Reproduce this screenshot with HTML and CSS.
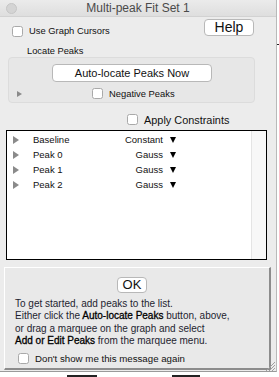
FILE: index.html
```html
<!DOCTYPE html>
<html lang="en">
<head>
    <meta charset="UTF-8">
    <title>Multi-peak Fit Set 1</title>
    <link rel="stylesheet" href="styles.css">
</head>
<body>
    <div class="window">
        <div class="titlebar">
            <span class="close-dot"></span>
            <span class="title">Multi-peak Fit Set 1</span>
        </div>

        <div class="top-row">
            <label class="check check-cursors"><span class="box"></span>Use Graph Cursors</label>
            <button class="btn btn-help">Help</button>
        </div>

        <div class="section-label">Locate Peaks</div>
        <div class="group">
            <button class="btn btn-auto">Auto-locate Peaks Now</button>
            <div class="neg-row">
                <span class="disclosure disclosure-sm"></span>
                <label class="check check-neg"><span class="box"></span>Negative Peaks</label>
            </div>
        </div>

        <div class="constraints-row">
            <label class="check check-lg"><span class="box"></span>Apply Constraints</label>
        </div>

        <div class="peak-list">
            <div class="rows">
                <div class="row"><span class="disclosure"></span><span class="name">Baseline</span><span class="type">Constant</span><span class="menu-arrow"></span></div>
                <div class="row"><span class="disclosure"></span><span class="name">Peak 0</span><span class="type">Gauss</span><span class="menu-arrow"></span></div>
                <div class="row"><span class="disclosure"></span><span class="name">Peak 1</span><span class="type">Gauss</span><span class="menu-arrow"></span></div>
                <div class="row"><span class="disclosure"></span><span class="name">Peak 2</span><span class="type">Gauss</span><span class="menu-arrow"></span></div>
            </div>
            <div class="scroll-col"></div>
        </div>

        <div class="help-panel">
            <button class="btn btn-ok">OK</button>
            <p class="help-text">To get started, add peaks to the list.<br>Either click the <b>Auto-locate Peaks</b> button, above,<br>or drag a marquee on the graph and select<br><b>Add or Edit Peaks</b> from the marquee menu.</p>
            <label class="check check-dont"><span class="box"></span>Don't show me this message again</label>
        </div>

        <!-- resize grip -->
        <svg class="grip" width="11" height="10" viewBox="0 0 11 10">
            <path d="M10 1 L1 10 M10 4 L4 10 M10 7 L7 10" stroke="#a0a0a0" stroke-width="1" fill="none"/>
        </svg>
    </div>

    <!-- bits of the windows behind -->
    <span class="behind behind-dash"></span>
    <span class="behind behind-a"></span>
    <span class="behind behind-b"></span>
</body>
</html>
```

FILE: styles.css
```css
body {
    margin: 0;
    width: 279px;
    height: 377px;
    overflow: hidden;
    position: relative;
    background: #ffffff;
    font-family: "Liberation Sans", Arial, sans-serif;
    color: #111;
}

.window {
    position: relative;
    width: 277px;
    height: 372px;
    box-sizing: border-box;
    background: #ececec;
    border-right: 1px solid #b9b9b9;
    border-bottom: 1px solid #9a9a9a;
    display: flex;
    flex-direction: column;
}

.titlebar {
    position: relative;
    height: 17px;
    flex: none;
    box-sizing: border-box;
    border-bottom: 1px solid #d2d2d2;
    background: linear-gradient(#ebebeb, #dedede);
    display: flex;
    align-items: center;
    justify-content: center;
}
.close-dot {
    position: absolute;
    left: 6px;
    top: 3px;
    width: 11px;
    height: 11px;
    box-sizing: border-box;
    border-radius: 50%;
    background: #d4d4d4;
    border: 1px solid #c6c6c6;
}
.title {
    font-size: 12px;
    color: #4a4a4a;
}

/* generic controls */
.btn {
    display: block;
    box-sizing: border-box;
    padding: 0;
    background: #ffffff;
    border: 1px solid #b8b8b8;
    border-radius: 4px;
    font-family: inherit;
    color: #111;
    text-align: center;
}

.check {
    display: flex;
    align-items: center;
    font-size: 9.4px;
    line-height: 12px;
}
.box {
    width: 11px;
    height: 11px;
    box-sizing: border-box;
    border: 1px solid #a9a9a9;
    border-radius: 2.5px;
    background: #fff;
    margin-right: 6px;
    flex: none;
}

.disclosure {
    width: 0;
    height: 0;
    border-top: 4px solid transparent;
    border-bottom: 4px solid transparent;
    border-left: 6px solid #8a8a8a;
    flex: none;
}
.disclosure-sm {
    border-top-width: 3px;
    border-bottom-width: 3px;
    border-left-width: 5px;
}

/* top row */
.top-row {
    display: flex;
    align-items: flex-start;
    height: 17px;
    margin-top: 2px;
    padding: 0 22px 0 12px;
    flex: none;
}
.check-cursors {
    margin-top: 6px;
}
.btn-help {
    margin-left: auto;
    width: 50px;
    height: 17px;
    font-size: 14px;
    line-height: 15px;
}

.section-label {
    margin: 9px 0 0 27px;
    font-size: 9.3px;
    line-height: 12px;
}

.group {
    margin: 0 21px 0 8px;
    height: 46px;
    flex: none;
    box-sizing: border-box;
    border: 1px solid #dcdcdc;
    border-radius: 4px;
    background: #e7e7e7;
}
.btn-auto {
    margin: 6px 0 0 43px;
    width: 160px;
    height: 18px;
    font-size: 11px;
    line-height: 16px;
}
.neg-row {
    display: flex;
    align-items: center;
    height: 13px;
    margin-top: 5px;
    padding-left: 8px;
}
.check-neg {
    margin-left: 70px;
}

.constraints-row {
    display: flex;
    height: 13px;
    margin-top: 10px;
    padding-left: 127px;
    flex: none;
}
.check-lg {
    font-size: 10.9px;
}

/* peak list */
.peak-list {
    margin: 4px 0 0 6px;
    width: 261px;
    height: 130px;
    flex: none;
    box-sizing: border-box;
    border: 1px solid #000;
    background: #fff;
    display: flex;
}
.rows {
    flex: 1;
    padding-top: 1px;
}
.scroll-col {
    width: 15px;
    box-sizing: border-box;
    background: #f7f7f7;
    border-left: 1px solid #e4e4e4;
}
.row {
    display: flex;
    align-items: center;
    height: 15px;
    padding-left: 6px;
    font-size: 9.5px;
}
.row .name {
    margin-left: 14px;
    width: 90px;
}
.row .type {
    width: 40px;
    text-align: right;
}
.menu-arrow {
    margin-left: 7px;
    width: 0;
    height: 0;
    border-left: 3.5px solid transparent;
    border-right: 3.5px solid transparent;
    border-top: 6px solid #000;
}

/* message panel */
.help-panel {
    margin: 7px 0 0 4px;
    width: 267px;
    height: 103px;
    flex: none;
    box-sizing: border-box;
    background: #e9e9e9;
    border-top: 1px solid #fff;
    border-left: 1px solid #fff;
    border-right: 2px solid #8c8c8c;
    border-bottom: 2px solid #8c8c8c;
    display: flex;
    flex-direction: column;
    align-items: flex-start;
}
.btn-ok {
    margin: 9px 0 0 112px;
    width: 30px;
    height: 16px;
    font-size: 13px;
    line-height: 14px;
}
.help-text {
    margin: 5px 0 0;
    padding-left: 10px;
    font-size: 10px;
    line-height: 12.4px;
    color: #1e1e30;
}
.help-text b {
    font-weight: normal;
    color: #000;
    -webkit-text-stroke: 0.3px #000;
}
.check-dont {
    margin: 5px 0 0 13px;
    font-size: 9.7px;
}

.grip {
    position: absolute;
    right: 0;
    bottom: 0;
}

.behind {
    position: absolute;
    background: #222;
}
.behind-dash {
    left: 277px;
    top: 44px;
    width: 2px;
    height: 1px;
}
.behind-a {
    left: 67px;
    top: 375px;
    width: 30px;
    height: 2px;
}
.behind-b {
    left: 172px;
    top: 375px;
    width: 28px;
    height: 2px;
}
```
